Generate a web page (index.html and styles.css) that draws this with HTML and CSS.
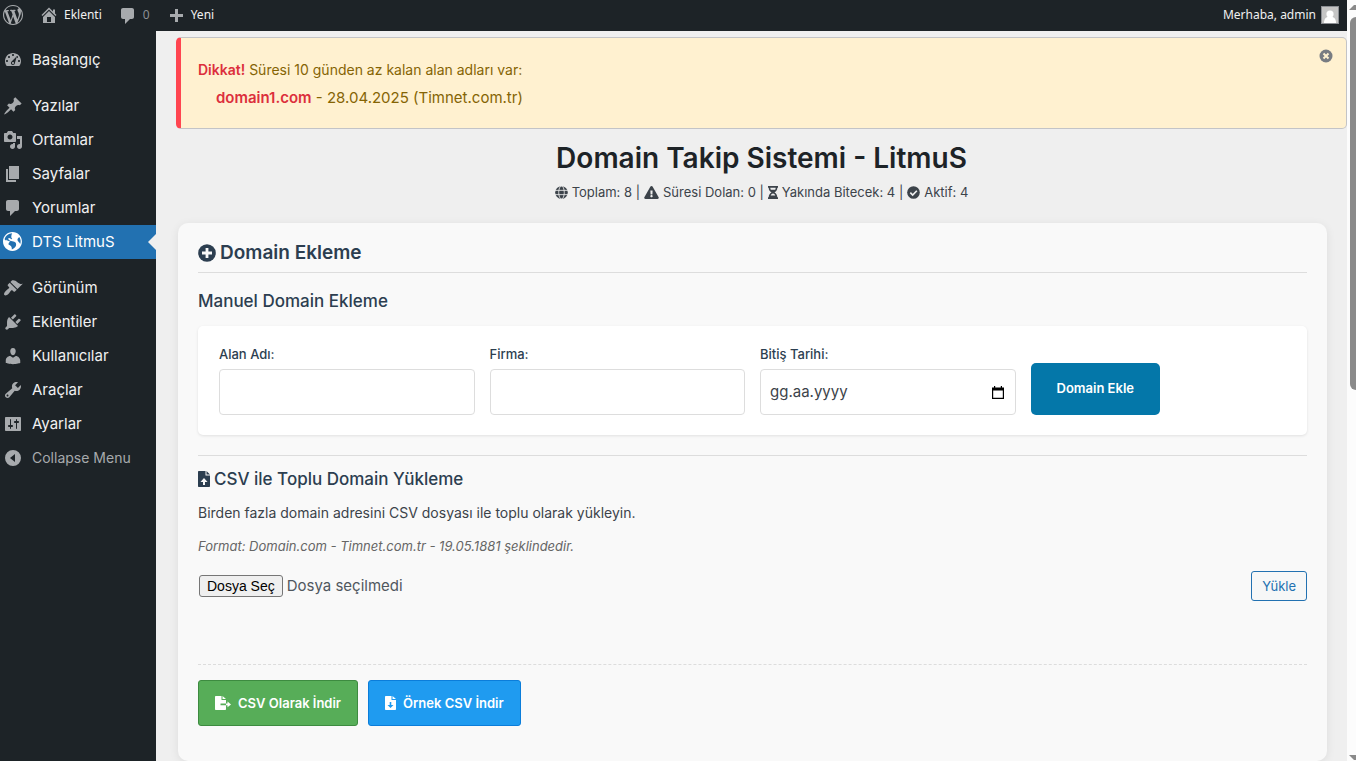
FILE: index.html
```html
<!DOCTYPE html>
<html lang="tr">
<head>
<meta charset="utf-8">
<meta name="viewport" content="width=device-width, initial-scale=1">
<title>Domain Takip Sistemi - LitmuS</title>
<link rel="stylesheet" href="styles.css">
</head>
<body>
<div class="window">
  <div class="app">
    <header class="adminbar">
      <a class="bar-item logo" href="#" aria-label="WordPress"><svg class="icon" viewBox="0 0 20 20"><path d="M20 10c0-5.51-4.49-10-10-10C4.48 0 0 4.49 0 10c0 5.52 4.48 10 10 10 5.51 0 10-4.48 10-10zM7.78 15.37L4.37 6.22c.55-.02 1.17-.08 1.17-.08.5-.06.44-1.13-.06-1.11 0 0-1.45.11-2.37.11-.18 0-.37 0-.58-.01C4.12 2.69 6.87 1.11 10 1.11c2.33 0 4.45.87 6.05 2.34-.68-.11-1.65.39-1.65 1.58 0 .74.45 1.36.9 2.1.35.61.55 1.36.55 2.46 0 1.49-1.4 5-1.4 5l-3.03-8.37c.54-.02.82-.17.82-.17.5-.05.44-1.25-.06-1.22 0 0-1.44.12-2.38.12-.87 0-2.33-.12-2.33-.12-.5-.03-.56 1.2-.06 1.22l.92.08 1.26 3.41zM17.41 10c.24-.64.74-1.87.43-4.25.7 1.29 1.05 2.71 1.05 4.25 0 3.29-1.73 6.24-4.4 7.78.97-2.59 1.94-5.2 2.92-7.78zM6.1 18.09C3.12 16.65 1.11 13.53 1.11 10c0-1.3.23-2.48.72-3.59C3.25 10.3 4.67 14.2 6.1 18.09zm4.03-6.63l2.58 6.98c-.86.29-1.76.45-2.71.45-.79 0-1.57-.11-2.29-.33.81-2.38 1.62-4.74 2.42-7.1z"/></svg></a>
      <a class="bar-item" href="#"><svg class="icon" viewBox="0 0 20 20"><path d="M16 8.500l1.530 1.530-1.060 1.060L10 4.600l-6.470 6.490-1.060-1.060L10 2.500l4 4v-2h2v4zm-6-2.460l6 5.990V18H4v-5.970zM12 17v-5H8v5h4z"/></svg>Eklenti</a>
      <a class="bar-item muted" href="#"><svg class="icon" viewBox="0 0 20 20"><path d="M5 3h9c1.100 0 2 .9 2 2v7c0 1.100-.9 2-2 2h-2l-5 5v-5H5c-1.100 0-2-.9-2-2V5c0-1.100.9-2 2-2z"/></svg>0</a>
      <a class="bar-item" href="#"><svg class="icon" viewBox="0 0 20 20"><path d="M17 9v3h-5v5H9v-5H4V9h5V4h3v5h5z"/></svg>Yeni</a>
      <a class="bar-item account" href="#">Merhaba, admin<svg class="avatar" viewBox="0 0 18 18"><rect x=".5" y=".5" width="17" height="17" fill="#c5c5c5" stroke="#8c8f94"/><circle cx="9" cy="8" r="3.6" fill="#fff"/><path d="M3 17c0-4 2-6 4-6h4c2 0 4 2 4 6z" fill="#fff"/></svg></a>
    </header>
    <div class="body">
      <nav class="sidebar" aria-label="Ana menü">
        <ul class="menu">
          <li><a href="#"><svg class="icon" viewBox="0 0 20 20"><path d="M3.76 16h12.48c1.1-1.37 1.76-3.11 1.76-5 0-4.42-3.58-8-8-8s-8 3.58-8 8c0 1.89.66 3.63 1.76 5zM10 4c.55 0 1 .45 1 1s-.45 1-1 1-1-.45-1-1 .45-1 1-1zM6 6c.55 0 1 .45 1 1s-.45 1-1 1-1-.45-1-1 .45-1 1-1zm8 0c.55 0 1 .45 1 1s-.45 1-1 1-1-.45-1-1 .45-1 1-1zm-5.37 5.55L14 6l-2.100 7c0 1.100-.9 2-2 2s-2-.9-2-2c0-.57.34-1.080.73-1.450zM4 10c.55 0 1 .45 1 1s-.45 1-1 1-1-.45-1-1 .45-1 1-1zm12 0c.55 0 1 .45 1 1s-.45 1-1 1-1-.45-1-1 .45-1 1-1zm-5 3c0-.55-.45-1-1-1s-1 .45-1 1 .45 1 1 1 1-.45 1-1z" fill-rule="evenodd"/></svg>Başlangıç</a></li>
        </ul>
        <ul class="menu">
          <li><a href="#"><svg class="icon" viewBox="0 0 20 20"><path d="M10.440 3.020l1.820-1.820 6.360 6.350-1.830 1.820c-1.050-.68-2.480-.57-3.410.36l-.75.75c-.92.93-1.040 2.350-.35 3.410l-1.830 1.820-2.410-2.410-2.800 2.790c-.42.42-3.380 2.710-3.800 2.290s1.860-3.390 2.280-3.810l2.790-2.790L4.100 9.360l1.830-1.820c1.050.69 2.480.57 3.400-.36l.75-.75c.93-.92 1.050-2.350.36-3.410z"/></svg>Yazılar</a></li>
          <li><a href="#"><svg class="icon" viewBox="0 0 20 20"><path d="M13 11V4c0-.55-.45-1-1-1h-1.670L9 1H5L3.670 3H2c-.55 0-1 .45-1 1v7c0 .55.45 1 1 1h10c.55 0 1-.45 1-1zM7 4.500c1.380 0 2.500 1.120 2.500 2.500S8.380 9.500 7 9.500 4.500 8.380 4.500 7 5.620 4.500 7 4.500zM14 6h5v10.500c0 1.380-1.120 2.500-2.500 2.500S14 17.880 14 16.500s1.120-2.500 2.500-2.500c.17 0 .34.020.5.050V9h-3V6zm-4 8.050V13h2v3.500c0 1.380-1.120 2.500-2.500 2.500S7 17.880 7 16.500 8.120 14 9.500 14c.17 0 .34.020.5.050z"/></svg>Ortamlar</a></li>
          <li><a href="#"><svg class="icon" viewBox="0 0 20 20"><path d="M6 15V2h10v13H6zm-1 1h8v2H3V5h2v11z"/></svg>Sayfalar</a></li>
          <li><a href="#"><svg class="icon" viewBox="0 0 20 20"><path d="M5 2h9c1.100 0 2 .9 2 2v7c0 1.100-.9 2-2 2h-2l-5 5v-5H5c-1.100 0-2-.9-2-2V4c0-1.100.9-2 2-2z"/></svg>Yorumlar</a></li>
          <li><a class="current" href="#" aria-current="page"><svg class="icon" viewBox="0 0 19 19"><path d="M9 0C4.030 0 0 4.030 0 9s4.030 9 9 9 9-4.030 9-9-4.030-9-9-9zm3.460 11.950c0 1.470-.8 3.300-4.060 4.700.3-4.170-2.520-3.690-3.200-5 .126-1.100.804-2.063 1.800-2.550-1.552-.266-3-.96-4.180-2 .05.47.28.904.64 1.210-.782-.295-1.458-.817-1.940-1.500.977-3.225 3.883-5.482 7.250-5.630-.84 1.380-1.500 4.130 0 5.570C7.230 7 6.260 5 5.410 5.790c-1.130 1.060.33 2.510 3.420 3.080 3.290.59 3.660 1.580 3.630 3.080zm1.340-4c-.32-1.110.62-2.230 1.690-3.140 1.356 1.955 1.670 4.450.84 6.680-.77-1.890-2.170-2.320-2.530-3.570v.03z"/></svg>DTS LitmuS</a></li>
        </ul>
        <ul class="menu">
          <li><a href="#"><svg class="icon" viewBox="0 0 20 20"><path d="M14.480 11.060L7.410 3.990l1.500-1.500c.5-.56 2.300-.47 3.510.32 1.210.8 1.430 1.280 2.910 2.100 1.180.64 2.450 1.260 4.450.85zm-.71.71L6.700 4.700 4.930 6.470c-.39.39-.39 1.020 0 1.410l1.060 1.060c.39.39.39 1.030 0 1.420-.6.6-1.430 1.110-2.210 1.690-.35.26-.7.53-1.010.84C1.430 14.230.4 16.080 1.400 17.070c.99 1 2.840-.03 4.180-1.360.31-.31.58-.66.85-1.020.57-.78 1.080-1.610 1.690-2.210.39-.39 1.020-.39 1.410 0l1.060 1.060c.39.39 1.020.39 1.410 0z"/></svg>Görünüm</a></li>
          <li><a href="#"><svg class="icon" viewBox="0 0 20 20"><path d="M13.110 4.360L9.870 7.600 8 5.730l3.240-3.240c.35-.34 1.050-.2 1.560.32.52.51.66 1.210.31 1.550zm-8 1.770l.91-1.120 9.010 9.010-1.190.84c-.71.71-2.630 1.160-3.820 1.160H6.140L4.900 17.260c-.59.59-1.540.59-2.120 0-.59-.58-.59-1.530 0-2.120l1.240-1.240v-3.880c0-1.130.4-3.190 1.090-3.890zm7.260 3.970l3.240-3.240c.34-.35 1.040-.21 1.550.31.52.51.66 1.210.31 1.550l-3.240 3.250z"/></svg>Eklentiler</a></li>
          <li><a href="#"><svg class="icon" viewBox="0 0 20 20"><path d="M10 9.250c-2.270 0-2.730-3.440-2.730-3.440C7 4.020 7.820 2 9.970 2c2.160 0 2.980 2.020 2.710 3.810 0 0-.41 3.440-2.680 3.440zm0 2.570L12.720 10c2.390 0 4.520 2.330 4.520 4.530v2.490s-3.650 1.130-7.240 1.130c-3.650 0-7.240-1.130-7.240-1.130v-2.490c0-2.250 1.940-4.480 4.470-4.480z"/></svg>Kullanıcılar</a></li>
          <li><a href="#"><svg class="icon" viewBox="0 0 20 20"><path d="M16.680 9.770c-1.340 1.340-3.300 1.670-4.950.99l-5.410 6.520c-.99.99-2.590.99-3.580 0s-.99-2.590 0-3.570l6.520-5.420c-.68-1.650-.35-3.610.99-4.950 1.280-1.280 3.120-1.620 4.720-1.060l-2.890 2.890 2.820 2.820 2.860-2.870c.53 1.580.18 3.390-1.080 4.650zM3.810 16.210c.4.39 1.040.39 1.430 0 .4-.4.4-1.040 0-1.430-.39-.4-1.030-.4-1.430 0-.39.39-.39 1.030 0 1.430z"/></svg>Araçlar</a></li>
          <li><a href="#"><svg class="icon" viewBox="0 0 20 20"><path fill-rule="evenodd" d="M18 16V4c0-.55-.45-1-1-1H3c-.55 0-1 .45-1 1v12c0 .55.45 1 1 1h14c.55 0 1-.45 1-1zM8 11h1c.55 0 1 .45 1 1s-.45 1-1 1H8v1.500c0 .28-.22.5-.5.5s-.5-.22-.5-.5V13H6c-.55 0-1-.45-1-1s.45-1 1-1h1V5.500c0-.28.22-.5.5-.5s.5.22.5.5V11zm5-2h-1c-.55 0-1-.45-1-1s.45-1 1-1h1V5.500c0-.28.22-.5.5-.5s.5.22.5.5V7h1c.55 0 1 .45 1 1s-.45 1-1 1h-1v5.500c0 .28-.22.5-.5.5s-.5-.22-.5-.5V9z"/></svg>Ayarlar</a></li>
          <li><button class="collapse" type="button"><svg class="icon" viewBox="0 0 20 20"><path fill-rule="evenodd" d="M10 2a8 8 0 1 0 0 16 8 8 0 0 0 0-16zM12 6v8l-5-4z"/></svg>Collapse Menu</button></li>
        </ul>
      </nav>
      <main class="content">
        <section class="notice">
          <div class="notice-text">
            <p><strong>Dikkat!</strong> Süresi 10 günden az kalan alan adları var:</p>
            <ul class="expiring"><li><strong>domain1.com</strong> - 28.04.2025 (Timnet.com.tr)</li></ul>
          </div>
          <button class="dismiss" type="button" aria-label="Kapat"><svg class="icon-14" viewBox="0 0 14 14"><circle cx="7" cy="7" r="6.500"/><path d="M4.500 4.500l5 5m0-5l-5 5" stroke="#fff1d0" stroke-width="2"/></svg></button>
        </section>
        <div class="heading">
          <h1>Domain Takip Sistemi - LitmuS</h1>
          <p class="stats">
            <svg class="icon-13" viewBox="0 0 14 14"><circle cx="7" cy="7" r="6.800"/><g fill="none" stroke="#efefef" stroke-width=".9"><path d="M0 4.700h14M0 9.300h14"/><ellipse cx="7" cy="7" rx="3" ry="7"/></g></svg>
            Toplam: 8 |
            <svg class="icon-warning" viewBox="0 0 576 512"><path d="M569.517 440.013C587.975 472.007 564.806 512 527.940 512H48.054c-36.937 0-59.999-40.055-41.577-71.987L246.423 23.985c18.467-32.009 64.720-31.951 83.154 0l239.940 416.028zM288 354c-25.405 0-46 20.595-46 46s20.595 46 46 46 46-20.595 46-46-20.595-46-46-46zm-43.673-165.346l7.418 136c.347 6.364 5.609 11.346 11.982 11.346h48.546c6.373 0 11.635-4.982 11.982-11.346l7.418-136c.375-6.874-5.098-12.654-11.982-12.654h-63.383c-6.884 0-12.356 5.780-11.981 12.654z"/></svg>
            Süresi Dolan: 0 |
            <svg class="icon-hourglass" viewBox="0 0 10 13"><path fill-rule="evenodd" d="M0 0h10v1.800H9.300c0 2.200-1 3.700-2.800 4.700 1.800 1 2.800 2.500 2.800 4.700H10V13H0v-1.800h.7c0-2.200 1-3.700 2.800-4.700C1.700 5.500.7 4 .7 1.800H0zM2.300 1.800c0 .8.200 1.400.5 2h4.400c.3-.6.5-1.200.5-2zM2.700 9.500h4.600C6.800 8.300 6 7.500 5 7.500s-1.800.8-2.300 2z"/></svg>
            Yakında Bitecek: 4 |
            <svg class="icon-13" viewBox="0 0 14 14"><circle cx="7" cy="7" r="6.800"/><path d="M3.600 7.200l2.500 2.500 4.500-4.600" fill="none" stroke="#efefef" stroke-width="1.800"/></svg>
            Aktif: 4
          </p>
        </div>
        <section class="card">
          <h2><svg class="icon-18" viewBox="0 0 18 18"><circle cx="9" cy="9" r="8.800"/><path d="M9 4v10M4 9h10" stroke="#f9f9f9" stroke-width="2.800"/></svg>Domain Ekleme</h2>
          <h3>Manuel Domain Ekleme</h3>
          <form class="add-form">
            <div class="field"><label for="domain">Alan Adı:</label><input id="domain" type="text"></div>
            <div class="field"><label for="firm">Firma:</label><input id="firm" type="text"></div>
            <div class="field"><label for="expiry">Bitiş Tarihi:</label>
              <div class="date-box"><input id="expiry" type="text" placeholder="gg.aa.yyyy"><button class="picker" type="button" aria-label="Takvimi aç"><svg class="icon-calendar" viewBox="0 0 12 13"><path fill-rule="evenodd" d="M0 1.500h2V0h1.200v1.500h5.600V0H10v1.500h2V13H0zM1.200 4.500v7.300h9.600V4.500z"/></svg></button></div>
            </div>
            <button class="submit" type="submit">Domain Ekle</button>
          </form>
          <section class="upload">
            <h3><svg class="icon-file" viewBox="0 0 12 16"><path fill-rule="evenodd" d="M1 0h6.500v4.500H12V15c0 .6-.4 1-1 1H1c-.6 0-1-.4-1-1V1c0-.6.4-1 1-1zM8.500 0L12 3.500H8.500zM5 14h2v-3h2.500L6 7 2.500 11H5z"/></svg>CSV ile Toplu Domain Yükleme</h3>
            <p>Birden fazla domain adresini CSV dosyası ile toplu olarak yükleyin.</p>
            <p class="format"><em>Format: Domain.com - Timnet.com.tr - 19.05.1881 şeklindedir.</em></p>
            <form class="upload-form">
              <div class="file-field"><input class="file-input" id="csv" type="file" accept=".csv"><label class="file-label" for="csv">Dosya Seç</label><span>Dosya seçilmedi</span></div>
              <button class="upload-button" type="submit">Yükle</button>
            </form>
          </section>
          <div class="downloads">
            <a class="download export" href="#"><svg class="icon-export" viewBox="0 0 16 14"><path d="M1 0h5.500v4H11v3.500H5.500v1.700H11V13c0 .6-.4 1-1 1H1c-.6 0-1-.4-1-1V1c0-.6.4-1 1-1zM7.500 0L11 3H7.500zM11 7.500h1.500V5.500L16 8.400l-3.500 2.900V9.200H11z"/></svg>CSV Olarak İndir</a>
            <a class="download sample" href="#"><svg class="icon-sample" viewBox="0 0 11 14"><path fill-rule="evenodd" d="M1 0h5.500v4H11v9c0 .6-.4 1-1 1H1c-.6 0-1-.4-1-1V1c0-.6.4-1 1-1zM7.500 0L11 3H7.500zM4.700 6v3H2.500l3 3 3-3H6.300V6z"/></svg>Örnek CSV İndir</a>
          </div>
        </section>
      </main>
    </div>
  </div>
  <div class="scrollbar" aria-hidden="true"><svg class="scroll-arrow" viewBox="0 0 7 5"><path d="M0 5l5-5h2v5z"/></svg><div class="thumb"></div><svg class="scroll-arrow" viewBox="0 0 7 5"><path d="M0 0l5 5h2V0z"/></svg></div>
</div>
</body>
</html>
```
FILE: styles.css
```css
*, *::before, *::after { box-sizing: border-box; }

body {
  margin: 0;
  background: #efefef;
  color: #3c434a;
  font: 13px/20px Inter, "Open Sans", sans-serif;
}

h1, h2, h3, p, ul { margin: 0; padding: 0; }
ul { list-style: none; }
a { color: inherit; text-decoration: none; }
button, input { font: inherit; }
svg { flex: none; fill: currentColor; }

.window { display: flex; min-height: 100vh; }
.app { flex: 1; min-width: 0; display: flex; flex-direction: column; }
.body { flex: 1; display: flex; }

/* Admin bar */
.adminbar {
  display: flex;
  align-items: center;
  gap: 16px;
  height: 31px;
  padding: 0 8px 1px 3px;
  background: #1d2327;
  color: #f0f0f1;
  font-family: "Noto Sans", sans-serif;
  font-size: 12px;
}
.bar-item { display: flex; align-items: center; gap: 5px; }
.bar-item .icon { color: #a7aaad; }
.muted { color: #8c8f94; }
.account { margin-left: auto; }
.avatar { width: 18px; height: 18px; }
.icon { width: 20px; height: 20px; }

/* Side menu */
.sidebar {
  flex: none;
  display: flex;
  flex-direction: column;
  gap: 12px;
  width: 156px;
  padding-top: 12px;
  background: #1d2327;
  color: #f0f0f1;
  font-size: 15px;
}
.menu a, .collapse {
  position: relative;
  display: flex;
  align-items: center;
  gap: 9px;
  width: 100%;
  height: 34px;
  padding: 0 3px;
}
.menu .icon { color: #a7aaad; }
.menu .current { background: #2271b1; color: #fff; }
.menu .current .icon { color: #fff; }
.menu .current::after {
  content: "";
  position: absolute;
  right: 0;
  top: 9px;
  border: 8px solid transparent;
  border-left-width: 0;
  border-right-color: #efefef;
}
.collapse { border: 0; background: none; color: #a7aaad; font-size: 14px; }

/* Content */
.content { flex: 1; min-width: 0; padding: 6px 0 0 20px; }

.notice {
  display: flex;
  justify-content: space-between;
  align-items: flex-start;
  padding: 22px 13px 20px 17px;
  border: 1px solid #c3c4c7;
  border-left: 5px solid #ff4550;
  border-radius: 5px;
  background: #fff1d0;
  color: #856404;
  font-size: 14px;
}
.notice strong { color: #dc2f3c; font-weight: 600; }
.expiring { padding: 8px 0 0 18px; font-size: 15px; }
.dismiss { display: flex; margin-top: -11px; padding: 0; border: 0; background: none; color: #787c82; }
.icon-14 { width: 14px; height: 14px; }

.heading { display: flex; flex-direction: column; align-items: center; gap: 7px; padding: 12px 0 21px; }
h1 { color: #1d2327; font-size: 28px; line-height: 34px; font-weight: 600; }
.stats { display: flex; align-items: center; gap: 4px; }
.icon-13 { width: 13px; height: 13px; }
.icon-warning { width: 15px; height: 13px; }
.icon-hourglass { width: 10px; height: 13px; }

.card {
  margin: 0 20px 0 2px;
  padding: 16px 20px 35px;
  border-radius: 10px;
  background: #f9f9f9;
  box-shadow: 0 2px 10px rgba(0, 0, 0, 0.08);
}
h2, h3 { display: flex; align-items: center; gap: 4px; color: #2c3e50; }
h2 { padding-bottom: 6px; border-bottom: 1px solid #dddddd; font-size: 19px; line-height: 27px; font-weight: 600; }
h3 { font-size: 17px; line-height: 24px; font-weight: 500; }
.card > h3 { margin: 16px 0 13px; }
.icon-18 { width: 18px; height: 18px; }
.icon-file { width: 12px; height: 16px; }

.add-form {
  display: grid;
  grid-template-columns: repeat(4, minmax(0, 1fr));
  align-items: end;
  gap: 15px;
  margin-bottom: 20px;
  padding: 18px 21px 20px;
  border-radius: 5px;
  background: #fff;
  box-shadow: 0 1px 3px rgba(0, 0, 0, 0.1);
}
.field { display: flex; flex-direction: column; gap: 5px; color: #2c3e50; font-weight: 500; }
.field > input, .date-box {
  width: 100%;
  height: 46px;
  border: 1px solid #dddddd;
  border-radius: 4px;
  background: #fff;
}
.date-box { display: flex; align-items: center; padding: 0 11px 0 9px; }
.date-box input { flex: 1; min-width: 0; padding: 0; border: 0; outline: 0; background: none; font-size: 15px; font-weight: 400; }
.date-box input::placeholder { color: #3c434a; opacity: 1; }
.picker { display: flex; padding: 0; border: 0; background: none; color: #000; }
.icon-calendar { width: 12px; height: 13px; }
.submit {
  justify-self: start;
  height: 52px;
  padding: 0 26px 2px;
  border: 0;
  border-radius: 5px;
  background: #0477a9;
  color: #fff;
  font-weight: 600;
}

.upload { padding: 11px 0 63px; border-top: 1px solid #dddddd; }
.upload p { margin-top: 12px; font-size: 14px; }
.upload .format { margin-top: 13px; color: #666; font-size: 13px; }
.upload-form { display: flex; justify-content: space-between; align-items: center; margin-top: 15px; }
.file-field { display: flex; align-items: center; gap: 4px; padding-left: 1px; font-size: 15px; color: #50575e; }
.file-input { position: absolute; width: 1px; height: 1px; opacity: 0; }
.file-label {
  padding: 0 7px;
  border: 1px solid #767676;
  border-radius: 3px;
  background: #efefef;
  color: #000;
  font-family: "Liberation Sans", sans-serif;
  font-size: 14px;
}
.upload-button {
  height: 30px;
  padding: 0 10px;
  border: 1px solid #2271b1;
  border-radius: 3px;
  background: #f6f7f7;
  color: #2271b1;
}

.downloads { display: flex; gap: 10px; padding-top: 15px; border-top: 1px dashed #dddddd; }
.download {
  display: flex;
  align-items: center;
  gap: 7px;
  height: 46px;
  padding: 0 16px;
  border: 1px solid #3d8b40;
  border-radius: 3px;
  color: #fff;
  font-weight: 600;
}
.export { background: #57ad58; }
.sample { border-color: #0b7dda; background: #1f9bf0; }
.icon-export { width: 16px; height: 14px; }
.icon-sample { width: 11px; height: 14px; }

/* Window scrollbar */
.scrollbar {
  flex: none;
  position: sticky;
  top: 0;
  display: flex;
  flex-direction: column;
  align-items: flex-end;
  width: 9px;
  height: 100vh;
  padding: 5px 0 1px 3px;
  background: #fcfcfc;
  color: #8a8a8a;
}
.scroll-arrow { width: 7px; height: 5px; }
.thumb { width: 100%; height: 49vh; margin: 7px 0 auto; border-radius: 6px 0 0 6px; background: #8a8a8a; }
```
